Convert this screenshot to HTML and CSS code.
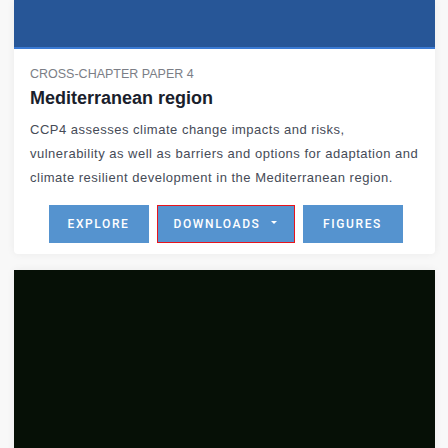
FILE: index.html
```html
<!DOCTYPE html>
<html>
<head>
<meta charset="utf-8">
<link rel="stylesheet" href="styles.css">
</head>
<body>
<div class="page">
  <div class="card">
    <div class="hero"></div>
    <div class="body">
      <div class="label">CROSS-CHAPTER PAPER 4</div>
      <h2 class="title">Mediterranean region</h2>
      <p class="desc">CCP4 assesses climate change impacts and risks, vulnerability as well as barriers and options for adaptation and climate resilient development in the Mediterranean region.</p>
      <div class="actions">
        <a class="btn btn-explore">Explore</a>
        <a class="btn btn-downloads">Downloads <span class="caret"></span></a>
        <a class="btn btn-figures">Figures</a>
      </div>
    </div>
  </div>
  <div class="dark"></div>
</div>
</body>
</html>
```
FILE: styles.css
```css
html, body {
  margin: 0;
  padding: 0;
  background: #f8f8f8;
  height: 448px;
  overflow: hidden;
}
.page {
  padding: 0 13px 0 14px;
  display: flex;
  flex-direction: column;
  gap: 16px;
}
.card {
  background: #fff;
  border-radius: 0 0 4px 4px;
  box-shadow: 0 0 8px rgba(0,0,0,0.06);
  padding-bottom: 11px;
}
.hero {
  height: 47px;
  background: #275697;
  border-bottom: 2px solid #3a7ad4;
}
.body {
  padding: 18px 14px 0 16px;
}
.label {
  font-family: "Liberation Sans", Arial, sans-serif;
  font-size: 12.5px;
  color: #7b7e86;
  line-height: 14px;
}
.title {
  font-family: "Liberation Sans", Arial, sans-serif;
  font-size: 18px;
  font-weight: bold;
  color: #1a1e2c;
  margin: 6px 0 0 0;
  line-height: 22px;
}
.desc {
  font-family: "Liberation Sans", Arial, sans-serif;
  font-size: 13px;
  color: #464b57;
  line-height: 24px;
  margin: 9px 0 0 0;
  letter-spacing: 0.5px;
}
.actions {
  display: flex;
  justify-content: center;
  gap: 8px;
  margin-top: 15px;
}
.btn {
  font-family: Roboto, "Liberation Sans", Arial, sans-serif;
  font-size: 12px;
  font-weight: 500;
  letter-spacing: 1.6px;
  text-transform: uppercase;
  color: #fff;
  background: #5593cf;
  height: 38px;
  display: flex;
  align-items: center;
  justify-content: center;
  box-sizing: border-box;
}
.btn-explore, .btn-figures { width: 100px; }
.btn-downloads {
  width: 138px;
  border: 1px solid #e8141c;
}
.caret {
  display: inline-block;
  width: 0;
  height: 0;
  border-left: 3.5px solid transparent;
  border-right: 3.5px solid transparent;
  border-top: 3.5px solid #fff;
  margin-left: 11px;
  margin-bottom: 3px;
}
.dark {
  height: 200px;
  background: #061006;
  box-shadow: 0 0 8px rgba(0,0,0,0.06);
}
```
